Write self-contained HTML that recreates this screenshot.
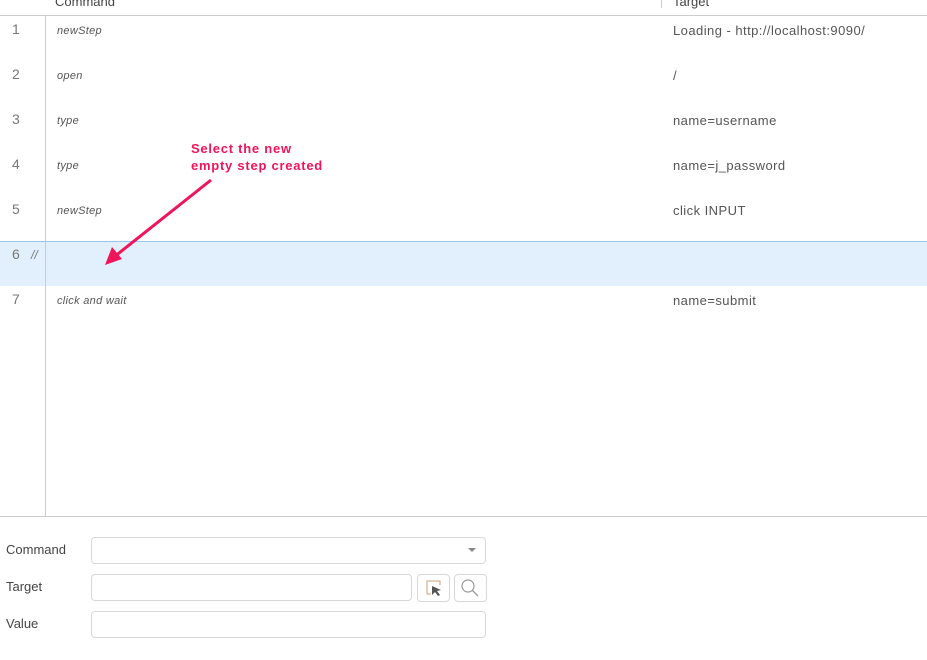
<!DOCTYPE html>
<html><head><meta charset="utf-8"><style>
body{margin:0;width:927px;height:660px;background:#fff;font-family:"Liberation Sans",sans-serif;position:relative;overflow:hidden;color:#444}
.a{position:absolute}
.num{font-size:14px;color:#777;left:12px}
.cmd{font-size:11px;font-style:italic;color:#555;left:57px;letter-spacing:0.3px}
.tgt{font-size:13px;color:#555;left:673px;letter-spacing:0.45px}
.lbl{font-size:13px;color:#444;left:6px}
.in{border:1px solid #d8d8d8;border-radius:4px;background:#fff}
</style></head><body>
<div class="a" style="left:55px;top:-6px;font-size:13px;color:#444">Command</div>
<div class="a" style="left:661px;top:-4px;width:1px;height:12px;background:#ccc"></div>
<div class="a" style="left:673px;top:-6px;font-size:13px;color:#444">Target</div>
<div class="a" style="left:0;top:15px;width:927px;height:1px;background:#ccc"></div>
<div class="a" style="left:0;top:241px;width:927px;height:45px;background:#e2f0fd;border-top:1px solid #9cc4e8;box-sizing:border-box"></div>
<div class="a" style="left:45px;top:16px;width:1px;height:500px;background:#ccc"></div>
<div class="a" style="left:0;top:516px;width:927px;height:1px;background:#ccc"></div>

<div class="a num" style="top:21px">1</div><div class="a cmd" style="top:25px">newStep</div><div class="a tgt" style="top:23px">Loading - http://localhost:9090/</div>
<div class="a num" style="top:66px">2</div><div class="a cmd" style="top:70px">open</div><div class="a tgt" style="top:68px">/</div>
<div class="a num" style="top:111px">3</div><div class="a cmd" style="top:115px">type</div><div class="a tgt" style="top:113px">name=username</div>
<div class="a num" style="top:156px">4</div><div class="a cmd" style="top:160px">type</div><div class="a tgt" style="top:158px">name=j_password</div>
<div class="a num" style="top:201px">5</div><div class="a cmd" style="top:205px">newStep</div><div class="a tgt" style="top:203px">click INPUT</div>
<div class="a num" style="top:246px">6</div><div class="a" style="left:31px;top:248px;font-size:12px;font-style:italic;color:#777">//</div>
<div class="a num" style="top:291px">7</div><div class="a cmd" style="top:295px">click and wait</div><div class="a tgt" style="top:293px">name=submit</div>

<div class="a" style="left:191px;top:140px;font-size:13px;font-weight:bold;color:#f0145a;line-height:17px;letter-spacing:0.75px">Select the new<br>empty step created</div>
<svg class="a" style="left:0;top:0" width="927" height="660"><line x1="211" y1="180" x2="114" y2="257" stroke="#f0145a" stroke-width="3"/><polygon points="105,265 112,247 122,259" fill="#f0145a"/></svg>

<div class="a lbl" style="top:542px">Command</div>
<div class="a in" style="left:91px;top:537px;width:393px;height:25px"></div>
<div class="a" style="left:468px;top:548px;width:0;height:0;border-left:4px solid transparent;border-right:4px solid transparent;border-top:4px solid #888"></div>
<div class="a lbl" style="top:579px">Target</div>
<div class="a in" style="left:91px;top:574px;width:319px;height:25px"></div>
<div class="a in" style="left:417px;top:574px;width:31px;height:26px"></div>
<svg class="a" style="left:417px;top:574px" width="32" height="27"><path d="M10 20V7h13v4M10 20h4" fill="none" stroke="#c9a07a" stroke-width="1"/><path d="M15 12l9 4-4 1 3 4-2 1-3-4-3 3z" fill="#555"/></svg>
<div class="a in" style="left:454px;top:574px;width:31px;height:26px"></div>
<svg class="a" style="left:454px;top:574px" width="32" height="27"><circle cx="14" cy="12" r="6" fill="none" stroke="#999" stroke-width="1.2"/><line x1="18.5" y1="16.5" x2="24" y2="22" stroke="#999" stroke-width="1.3"/></svg>
<div class="a lbl" style="top:616px">Value</div>
<div class="a in" style="left:91px;top:611px;width:393px;height:25px"></div>
</body></html>
